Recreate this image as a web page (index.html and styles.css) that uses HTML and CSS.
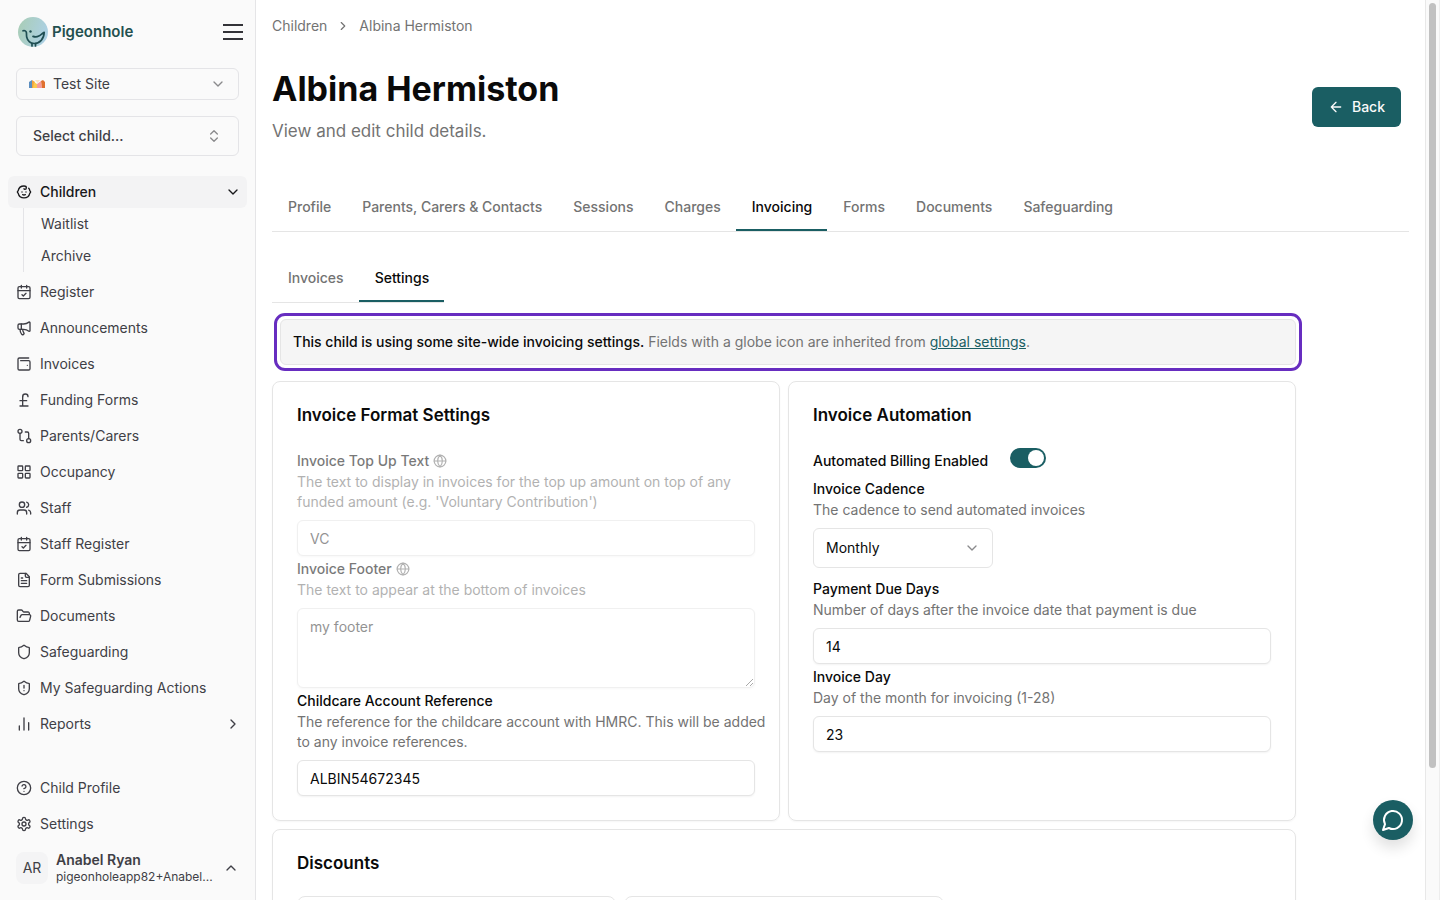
FILE: index.html
```html
<!DOCTYPE html>
<html lang="en">
<head>
<meta charset="utf-8">
<meta name="viewport" content="width=device-width, initial-scale=1">
<title>Albina Hermiston - Pigeonhole</title>
<link rel="stylesheet" href="styles.css">
</head>
<body>
<div class="app">
  <aside class="sidebar">
    <div class="brand-row">
      <a class="brand" href="#">
        <svg class="brand-mark" viewBox="0 0 30 30" aria-hidden="true">
          <defs><linearGradient id="sky" x1="0" y1="0" x2="1" y2="0.3"><stop offset="0" stop-color="#a9cdb4"/><stop offset="1" stop-color="#acd0e2"/></linearGradient></defs>
          <circle cx="15" cy="15" r="15" fill="url(#sky)"/>
          <g fill="none" stroke="#1f4e52" stroke-width="1.7" stroke-linecap="round" stroke-linejoin="round">
            <path d="M5 13.800c1.800-.6 3.200.2 3.400 1.800.2 1.500 0 3 .3 4.400.8 4 4 6.500 7.600 6.500 5.500 0 9.700-4.500 9.900-11.200-2 1-3.300 2.800-5.400 3.800-2 1-4 .9-5.800.3"/>
            <path d="M14 26.500V29M17.500 26.500V29"/>
          </g>
          <circle cx="12.500" cy="14.500" r="1.200" fill="#1f4e52"/>
        </svg>
        <span class="brand-name">Pigeonhole</span>
      </a>
      <button class="menu-button" type="button" aria-label="Toggle menu">
        <svg viewBox="0 0 20 16" width="20" height="16" aria-hidden="true"><path d="M0 1h20M0 8h20M0 15h20" stroke="currentColor" stroke-width="2"/></svg>
      </button>
    </div>
    <button class="picker site-picker" type="button">
      <svg class="site-art" viewBox="0 0 16 10" aria-hidden="true"><path d="M0 3 3 1v8H0z" fill="#5b8ebf"/><path d="M3 1l3 2v6H3z" fill="#f2a33c"/><path d="M5 3l3 2 1 4H4z" fill="#fbc94d"/><path d="M8 5l4-3 1 7H8z" fill="#f59a9b"/><path d="M12 2l2-1 2 2v6h-3z" fill="#e0702f"/><path d="M6 1h5L8.500 4z" fill="#fbe3c2"/></svg>
      <span class="grow">Test Site</span>
      <svg class="icon muted" viewBox="0 0 24 24"><path d="m6 9 6 6 6-6"/></svg>
    </button>
    <button class="picker child-picker" type="button">
      <span class="grow">Select child...</span>
      <svg class="icon muted" viewBox="0 0 24 24"><path d="m7 15 5 5 5-5"/><path d="m7 9 5-5 5 5"/></svg>
    </button>
    <nav class="nav" aria-label="Main">
      <a class="nav-item active" href="#"><svg class="icon" viewBox="0 0 24 24"><path d="M9 12h.01M15 12h.01"/><path d="M10 16c.5.3 1.200.5 2 .5s1.500-.2 2-.5"/><path d="M19 6.300a9 9 0 0 1 1.800 3.900 2 2 0 0 1 0 3.600 9 9 0 0 1-17.600 0 2 2 0 0 1 0-3.600A9 9 0 0 1 12 3c2 0 3.500 1.100 3.500 2.500s-.9 2.500-2 2.500c-.8 0-1.500-.4-1.500-1"/></svg><span class="grow">Children</span><svg class="icon" viewBox="0 0 24 24"><path d="m6 9 6 6 6-6"/></svg></a>
      <div class="subnav">
        <a class="subnav-item" href="#">Waitlist</a>
        <a class="subnav-item" href="#">Archive</a>
      </div>
      <a class="nav-item" href="#"><svg class="icon" viewBox="0 0 24 24"><path d="M8 2v4M16 2v4M3 10h18"/><rect width="18" height="18" x="3" y="4" rx="2"/><path d="m9 16 2 2 4-4"/></svg>Register</a>
      <a class="nav-item" href="#"><svg class="icon" viewBox="0 0 24 24"><path d="M11 6a13 13 0 0 0 8.400-2.800A1 1 0 0 1 21 4v12a1 1 0 0 1-1.600.8A13 13 0 0 0 11 14H5a2 2 0 0 1-2-2V8a2 2 0 0 1 2-2z"/><path d="M6 14a12 12 0 0 0 2.400 7.200 2 2 0 0 0 3.200-2.400A8 8 0 0 1 10 14M8 6v8"/></svg>Announcements</a>
      <a class="nav-item" href="#"><svg class="icon" viewBox="0 0 24 24"><path d="M17 14h.01"/><path d="M7 7h12a2 2 0 0 1 2 2v10a2 2 0 0 1-2 2H5a2 2 0 0 1-2-2V5a2 2 0 0 1 2-2h14"/></svg>Invoices</a>
      <a class="nav-item" href="#"><svg class="icon" viewBox="0 0 24 24"><path d="M18 7c0-5.333-8-5.333-8 0"/><path d="M10 7v14M6 21h12M6 13h10"/></svg>Funding Forms</a>
      <a class="nav-item" href="#"><svg class="icon" viewBox="0 0 24 24"><circle cx="6" cy="5" r="3"/><path d="M14 6h3a2 2 0 0 1 2 2v8"/><path d="M11 19H8a2 2 0 0 1-2-2V8"/><circle cx="19" cy="19" r="3"/></svg>Parents/Carers</a>
      <a class="nav-item" href="#"><svg class="icon" viewBox="0 0 24 24"><rect width="7" height="7" x="3" y="3" rx="1"/><rect width="7" height="7" x="14" y="3" rx="1"/><rect width="7" height="7" x="14" y="14" rx="1"/><rect width="7" height="7" x="3" y="14" rx="1"/></svg>Occupancy</a>
      <a class="nav-item" href="#"><svg class="icon" viewBox="0 0 24 24"><path d="M16 21v-2a4 4 0 0 0-4-4H6a4 4 0 0 0-4 4v2"/><circle cx="9" cy="7" r="4"/><path d="M22 21v-2a4 4 0 0 0-3-3.870M16 3.130a4 4 0 0 1 0 7.750"/></svg>Staff</a>
      <a class="nav-item" href="#"><svg class="icon" viewBox="0 0 24 24"><path d="M8 2v4M16 2v4M3 10h18"/><rect width="18" height="18" x="3" y="4" rx="2"/><path d="m9 16 2 2 4-4"/></svg>Staff Register</a>
      <a class="nav-item" href="#"><svg class="icon" viewBox="0 0 24 24"><path d="M15 2H6a2 2 0 0 0-2 2v16a2 2 0 0 0 2 2h12a2 2 0 0 0 2-2V7Z"/><path d="M14 2v4a2 2 0 0 0 2 2h4M10 9H8M16 13H8M16 17H8"/></svg>Form Submissions</a>
      <a class="nav-item" href="#"><svg class="icon" viewBox="0 0 24 24"><path d="m6 14 1.450-2.900A2 2 0 0 1 9.240 10H20a2 2 0 0 1 1.940 2.500l-1.550 6a2 2 0 0 1-1.940 1.500H4a2 2 0 0 1-2-2V5a2 2 0 0 1 2-2h3.930a2 2 0 0 1 1.660.9l.82 1.200a2 2 0 0 0 1.660.9H18a2 2 0 0 1 2 2v2"/></svg>Documents</a>
      <a class="nav-item" href="#"><svg class="icon" viewBox="0 0 24 24"><path d="M20 13c0 5-3.500 7.500-7.660 8.950a1 1 0 0 1-.67-.01C7.500 20.500 4 18 4 13V6a1 1 0 0 1 1-1c2 0 4.500-1.200 6.240-2.720a1.170 1.170 0 0 1 1.520 0C14.510 3.810 17 5 19 5a1 1 0 0 1 1 1z"/></svg>Safeguarding</a>
      <a class="nav-item" href="#"><svg class="icon" viewBox="0 0 24 24"><path d="M20 13c0 5-3.500 7.500-7.660 8.950a1 1 0 0 1-.67-.01C7.500 20.500 4 18 4 13V6a1 1 0 0 1 1-1c2 0 4.500-1.200 6.240-2.720a1.170 1.170 0 0 1 1.520 0C14.510 3.810 17 5 19 5a1 1 0 0 1 1 1z"/><path d="M12 8v4M12 16h.01"/></svg>My Safeguarding Actions</a>
      <a class="nav-item" href="#"><svg class="icon" viewBox="0 0 24 24"><path d="M19 21V10M12 21V3M5 21v-6"/></svg><span class="grow">Reports</span><svg class="icon" viewBox="0 0 24 24"><path d="m9 18 6-6-6-6"/></svg></a>
    </nav>
    <nav class="nav nav-bottom" aria-label="Account">
      <a class="nav-item" href="#"><svg class="icon" viewBox="0 0 24 24"><circle cx="12" cy="12" r="10"/><path d="M9.090 9a3 3 0 0 1 5.830 1c0 2-3 3-3 3M12 17h.01"/></svg>Child Profile</a>
      <a class="nav-item" href="#"><svg class="icon" viewBox="0 0 24 24"><path d="M12.220 2h-.44a2 2 0 0 0-2 2v.18a2 2 0 0 1-1 1.730l-.43.25a2 2 0 0 1-2 0l-.15-.08a2 2 0 0 0-2.730.73l-.22.38a2 2 0 0 0 .73 2.730l.15.1a2 2 0 0 1 1 1.720v.51a2 2 0 0 1-1 1.740l-.15.09a2 2 0 0 0-.73 2.730l.22.38a2 2 0 0 0 2.730.73l.15-.08a2 2 0 0 1 2 0l.43.25a2 2 0 0 1 1 1.730V20a2 2 0 0 0 2 2h.44a2 2 0 0 0 2-2v-.18a2 2 0 0 1 1-1.730l.43-.25a2 2 0 0 1 2 0l.15.08a2 2 0 0 0 2.730-.73l.22-.39a2 2 0 0 0-.73-2.730l-.15-.08a2 2 0 0 1-1-1.740v-.5a2 2 0 0 1 1-1.740l.15-.09a2 2 0 0 0 .73-2.730l-.22-.38a2 2 0 0 0-2.730-.73l-.15.08a2 2 0 0 1-2 0l-.43-.25a2 2 0 0 1-1-1.730V4a2 2 0 0 0-2-2z"/><circle cx="12" cy="12" r="3"/></svg>Settings</a>
    </nav>
    <button class="user" type="button">
      <span class="avatar">AR</span>
      <span class="user-text"><span class="user-name">Anabel Ryan</span><span class="user-mail">pigeonholeapp82+Anabel...</span></span>
      <svg class="icon" viewBox="0 0 24 24"><path d="m18 15-6-6-6 6"/></svg>
    </button>
  </aside>

  <main class="main">
    <nav class="breadcrumb" aria-label="Breadcrumb">
      <a href="#">Children</a>
      <svg class="crumb-icon" viewBox="0 0 24 24"><path d="m9 18 6-6-6-6"/></svg>
      <a href="#">Albina Hermiston</a>
    </nav>
    <header class="page-head">
      <div>
        <h1 class="page-title">Albina Hermiston</h1>
        <p class="page-sub">View and edit child details.</p>
      </div>
      <button class="back" type="button"><svg class="icon" viewBox="0 0 24 24"><path d="m12 19-7-7 7-7M19 12H5"/></svg>Back</button>
    </header>
    <div class="tabs" role="tablist">
      <button class="tab" type="button" role="tab">Profile</button>
      <button class="tab" type="button" role="tab">Parents, Carers &amp; Contacts</button>
      <button class="tab" type="button" role="tab">Sessions</button>
      <button class="tab" type="button" role="tab">Charges</button>
      <button class="tab selected" type="button" role="tab" aria-selected="true">Invoicing</button>
      <button class="tab" type="button" role="tab">Forms</button>
      <button class="tab" type="button" role="tab">Documents</button>
      <button class="tab" type="button" role="tab">Safeguarding</button>
    </div>
    <div class="tabs subtabs" role="tablist">
      <button class="tab" type="button" role="tab">Invoices</button>
      <button class="tab selected" type="button" role="tab" aria-selected="true">Settings</button>
    </div>
    <div class="content">
      <div class="highlight">
        <p class="notice"><strong>This child is using some site-wide invoicing settings.</strong> Fields with a globe icon are inherited from <a href="#">global settings</a>.</p>
      </div>
      <div class="cards">
        <section class="card">
          <h2 class="card-title">Invoice Format Settings</h2>
          <div class="field disabled">
            <div class="field-label"><label for="topup">Invoice Top Up Text</label><svg class="globe" viewBox="0 0 24 24"><circle cx="12" cy="12" r="10"/><path d="M12 2a14.500 14.500 0 0 0 0 20 14.500 14.500 0 0 0 0-20M2 12h20"/></svg></div>
            <p class="hint">The text to display in invoices for the top up amount on top of any funded amount (e.g. 'Voluntary Contribution')</p>
            <input class="control" id="topup" type="text" value="VC" disabled>
          </div>
          <div class="field disabled">
            <div class="field-label"><label for="footer">Invoice Footer</label><svg class="globe" viewBox="0 0 24 24"><circle cx="12" cy="12" r="10"/><path d="M12 2a14.500 14.500 0 0 0 0 20 14.500 14.500 0 0 0 0-20M2 12h20"/></svg></div>
            <p class="hint">The text to appear at the bottom of invoices</p>
            <textarea class="control area" id="footer" disabled>my footer</textarea>
          </div>
          <div class="field">
            <div class="field-label"><label for="account">Childcare Account Reference</label></div>
            <p class="hint hint-wide">The reference for the childcare account with HMRC. This will be added to any invoice references.</p>
            <input class="control" id="account" type="text" value="ALBIN54672345">
          </div>
        </section>
        <section class="card">
          <h2 class="card-title">Invoice Automation</h2>
          <div class="switch-row">
            <div class="field-label"><label for="billing">Automated Billing Enabled</label></div>
            <input class="switch" id="billing" type="checkbox" role="switch" checked>
          </div>
          <div class="field spaced">
            <div class="field-label"><label for="cadence">Invoice Cadence</label></div>
            <p class="hint">The cadence to send automated invoices</p>
            <div class="select-wrap">
              <select class="select" id="cadence"><option>Monthly</option><option>Weekly</option></select>
              <svg class="icon muted" viewBox="0 0 24 24"><path d="m6 9 6 6 6-6"/></svg>
            </div>
          </div>
          <div class="field">
            <div class="field-label"><label for="due">Payment Due Days</label></div>
            <p class="hint">Number of days after the invoice date that payment is due</p>
            <input class="control" id="due" type="text" value="14">
          </div>
          <div class="field">
            <div class="field-label"><label for="day">Invoice Day</label></div>
            <p class="hint">Day of the month for invoicing (1-28)</p>
            <input class="control" id="day" type="text" value="23">
          </div>
        </section>
        <section class="card wide">
          <h2 class="card-title">Discounts</h2>
          <div class="discounts"><div class="discount"></div><div class="discount"></div></div>
        </section>
      </div>
    </div>
  </main>
  <div class="scroll-track" aria-hidden="true"><div class="scroll-thumb"></div></div>
</div>
<button class="chat" type="button" aria-label="Open chat"><svg viewBox="0 0 24 24" aria-hidden="true"><path d="M7.900 20A9 9 0 1 0 4 16.100L2 22Z"/></svg></button>
</body>
</html>
```
FILE: styles.css
```css
*, *::before, *::after { box-sizing: border-box; }
body { margin: 0; font-family: Inter, "Liberation Sans", sans-serif; font-size: 14px; line-height: 20px; color: #0a0a0a; background: #fff; }
h1, h2, p { margin: 0; }
a { color: inherit; text-decoration: none; }
button, input, select, textarea { font: inherit; color: inherit; }
button { border: 0; padding: 0; background: none; text-align: left; cursor: pointer; }
svg { flex: none; display: block; }

.app { display: flex; height: 100vh; overflow: hidden; }
.grow { flex: 1; }
.icon { width: 16px; height: 16px; }
.icon, .crumb-icon, .globe { fill: none; stroke: currentColor; stroke-width: 2; stroke-linecap: round; stroke-linejoin: round; }
.muted { color: #8a8a8c; }

.sidebar { flex: none; width: 256px; display: flex; flex-direction: column; padding: 16px 8px; background: #fafafa; border-right: 1px solid #e5e5e7; color: #3f3f46; }
.brand-row { display: flex; align-items: center; justify-content: space-between; height: 32px; padding: 0 4px 0 10px; }
.brand { display: flex; align-items: center; gap: 4px; }
.brand-mark { width: 30px; height: 30px; }
.brand-name { font-size: 15px; font-weight: 600; color: #23504f; }
.menu-button { color: #333338; }
.picker { display: flex; align-items: center; margin: 0 8px; border: 1px solid #e4e4e7; border-radius: 6px; }
.site-picker { height: 32px; margin-top: 20px; padding: 0 12px; gap: 8px; }
.site-art { width: 16px; height: 10px; }
.child-picker { height: 40px; margin-top: 16px; padding: 0 16px; font-weight: 500; }
.nav { display: flex; flex-direction: column; gap: 4px; margin-top: 20px; }
.nav-item { display: flex; align-items: center; gap: 8px; height: 32px; padding: 0 6px 0 8px; border-radius: 6px; }
.nav-item.active { background: #f3f3f4; color: #18181b; font-weight: 500; }
.subnav { margin: -4px 0 0 15px; border-left: 1px solid #e4e4e7; }
.subnav-item { display: flex; align-items: center; height: 32px; padding-left: 17px; }
.nav-bottom { margin-top: auto; }
.user { display: flex; align-items: center; gap: 8px; margin: 12px 8px 0; height: 32px; }
.avatar { display: grid; place-items: center; width: 32px; height: 32px; border-radius: 8px; background: #f4f4f5; }
.user-text { flex: 1; min-width: 0; display: flex; flex-direction: column; }
.user-name { font-weight: 600; line-height: 18px; }
.user-mail { font-size: 12px; line-height: 16px; white-space: nowrap; }

.main { flex: 1; min-width: 0; padding: 16px 16px 0; overflow: hidden; }
.breadcrumb { display: flex; align-items: center; gap: 9px; color: #737373; }
.crumb-icon { width: 14px; height: 14px; }
.page-head { display: flex; align-items: center; justify-content: space-between; margin: 33px 0 38px; padding-right: 8px; }
.page-title { font-size: 34px; line-height: 40px; font-weight: 700; }
.page-sub { margin-top: 8px; font-size: 17px; line-height: 28px; color: #737373; }
.back { display: flex; align-items: center; gap: 8px; height: 40px; padding: 0 16px; border-radius: 6px; background: #1a5e63; color: #fafafa; font-weight: 500; }
.tabs { display: flex; border-bottom: 1px solid #e5e5e5; }
.tab { height: 48px; padding: 2px 15px 0 16px; border-bottom: 2px solid transparent; color: #737373; font-weight: 500; }
.tab.selected { color: #0a0a0a; border-bottom-color: #1a5e63; }
.subtabs { width: fit-content; margin-top: 22px; }

.content { max-width: 1024px; }
.highlight { margin: 10px -6px 10px 2px; padding: 3px; border: 3px solid #672dc0; border-radius: 11px; }
.notice { padding: 12px; border: 1px solid #e5e5e5; border-radius: 6px; background: #f5f5f5; color: #737373; }
.notice strong { color: #0a0a0a; font-weight: 500; }
.notice a { color: #1a5e63; text-decoration: underline; }
.cards { display: grid; grid-template-columns: 1fr 1fr; gap: 8px; }
.card { padding: 24px; border: 1px solid #e5e5e5; border-radius: 8px; box-shadow: 0 1px 2px rgba(0, 0, 0, 0.04); }
.card-title { margin-bottom: 24px; font-size: 17px; line-height: 18px; font-weight: 600; }
.wide { grid-column: 1 / -1; }
.field-label { display: flex; align-items: center; gap: 4px; height: 24px; padding-top: 2px; font-weight: 500; }
.globe { width: 14px; height: 14px; color: #737373; }
.hint { color: #737373; }
.hint-wide { margin-right: -12px; }
.control { display: block; width: 100%; height: 36px; margin-top: 8px; padding: 4px 12px; border: 1px solid #e5e5e5; border-radius: 6px; background: #fff; box-shadow: 0 1px 2px rgba(0, 0, 0, 0.05); }
.area { height: 80px; padding: 8px 12px; resize: vertical; }
.disabled { opacity: 0.55; }
.disabled .control { color: #3a3a3a; }
.switch-row { display: flex; gap: 22px; height: 28px; }
.switch { appearance: none; width: 36px; height: 20px; margin: 0; padding: 2px; border-radius: 10px; background: #1a5e63; }
.switch::before { content: ""; display: block; width: 16px; height: 16px; border-radius: 8px; background: #fff; }
.switch:checked::before { margin-left: auto; }
.spaced { margin-bottom: 8px; }
.select-wrap { display: grid; width: 180px; margin-top: 8px; align-items: center; }
.select-wrap > * { grid-area: 1 / 1; }
.select-wrap .icon { justify-self: end; margin-right: 13px; pointer-events: none; }
.select { appearance: none; width: 100%; height: 40px; padding: 0 12px; border: 1px solid #e5e5e5; border-radius: 6px; background: #fff; }
.discounts { display: grid; grid-template-columns: repeat(3, 1fr); gap: 8px; }
.discount { height: 160px; border: 1px solid #e5e5e5; border-radius: 8px; }

.scroll-track { flex: none; width: 15px; padding: 3px 3px 0; background: #fafafa; border-left: 1px solid #e8e8e8; border-right: 1px solid #ededed; }
.scroll-thumb { height: 85.3%; border-radius: 4px; background: #c1c1c1; }
.chat { position: fixed; right: 27px; bottom: 60px; display: grid; place-items: center; width: 40px; height: 40px; border-radius: 50%; background: #1a5e63; color: #fff; box-shadow: 0 8px 14px rgba(0, 0, 0, 0.12); }
.chat svg { width: 24px; height: 24px; fill: none; stroke: currentColor; stroke-width: 2; stroke-linejoin: round; }
```
